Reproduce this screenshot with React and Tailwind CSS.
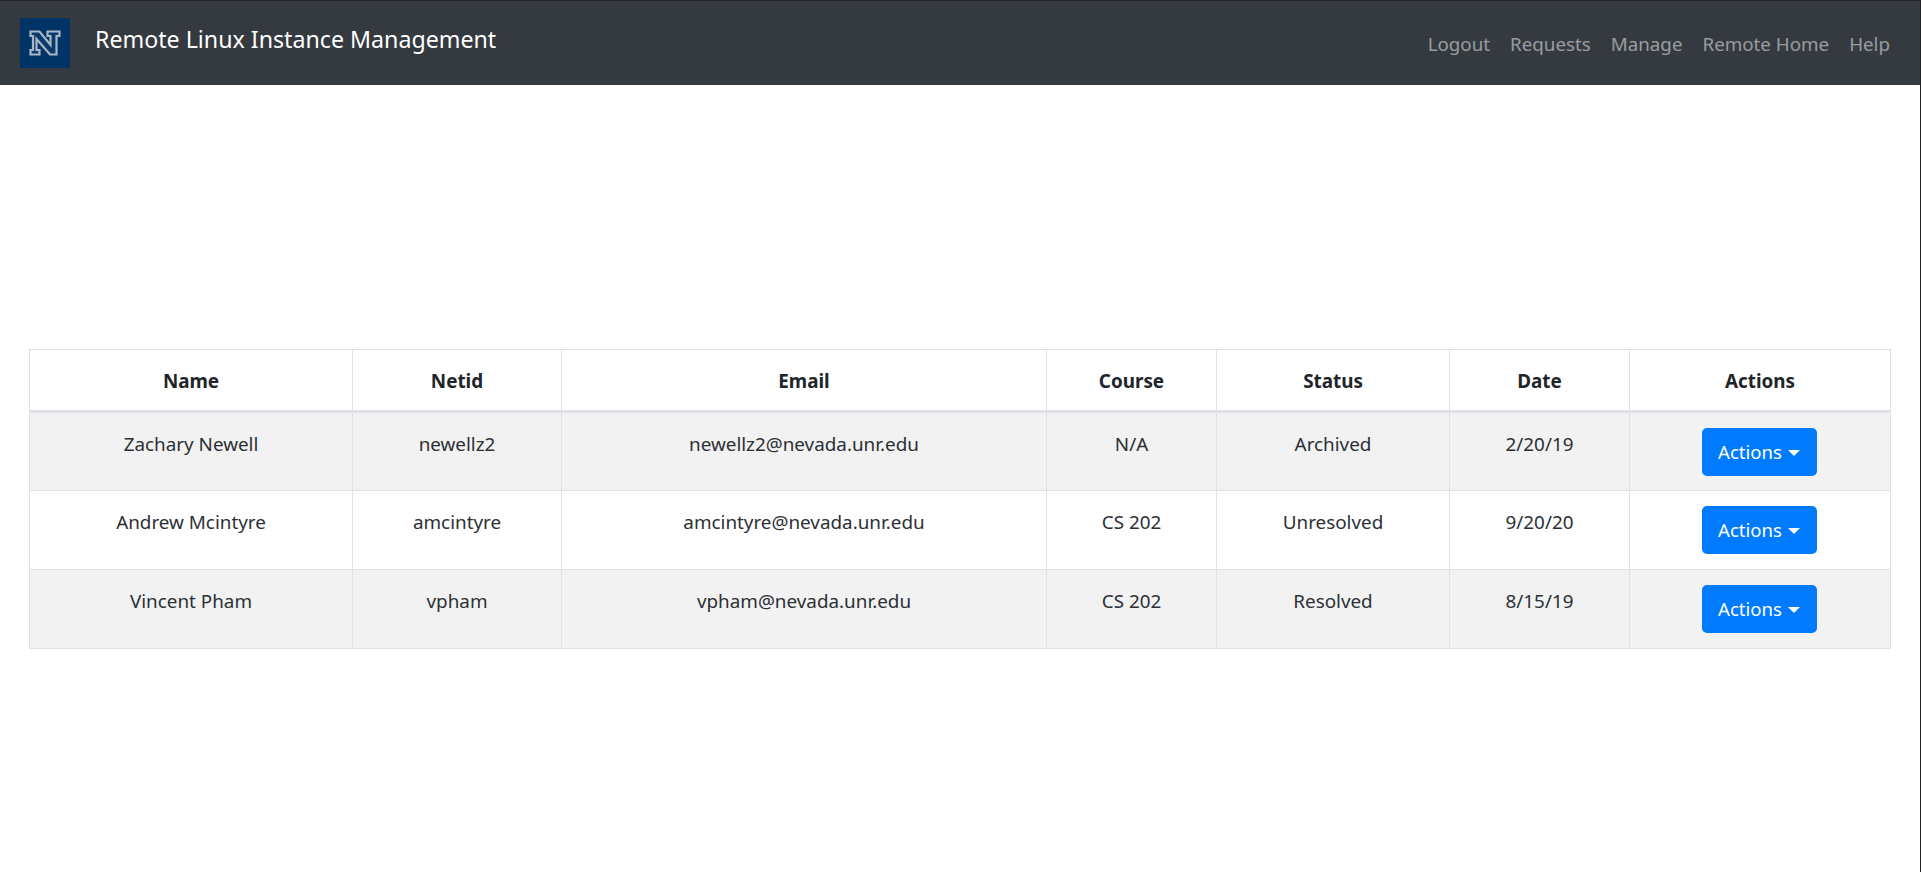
const rows = [
  ["Zachary Newell", "newellz2", "newellz2@nevada.unr.edu", "N/A", "Archived", "2/20/19"],
  ["Andrew Mcintyre", "amcintyre", "amcintyre@nevada.unr.edu", "CS 202", "Unresolved", "9/20/20"],
  ["Vincent Pham", "vpham", "vpham@nevada.unr.edu", "CS 202", "Resolved", "8/15/19"],
];
const headers = ["Name", "Netid", "Email", "Course", "Status", "Date", "Actions"];
const widths = ["w-[323px]", "w-[209px]", "w-[485px]", "w-[170px]", "w-[233px]", "w-[180px]", "w-[261px]"];

function Logo() {
  return (
    <div className="w-[50px] h-[50px] bg-[#003366] flex items-center justify-center shrink-0">
      <svg width="32" height="26" viewBox="0 0 32 26">
        <path d="M1.5 1.5H10.5L21.5 15V6H18.5V1.5H30.5V6H27.5V24.5H21L7.5 9V20H10.5V24.5H1.5V20H4V6H1.5Z" fill="#0b3a6c" stroke="#a9b6c6" strokeWidth="2.2" />
      </svg>
    </div>
  );
}

function Caret() {
  return <span className="inline-block ml-[6px] align-[3px] border-t-[6px] border-x-[6px] border-t-white border-x-transparent" />;
}

export default function App() {
  return (
    <div className="min-h-[872px] bg-white border-r border-r-[#222222] font-['Noto_Sans','Open_Sans',sans-serif] text-[#2b3035] text-[18.85px]">
      <nav className="h-[85px] bg-[#343a40] border-t border-t-[#222222] flex pl-5 pr-[30px]">
        <div className="flex items-start pt-[17px]">
          <Logo />
          <span className="ml-[25px] -mt-[1px] text-[23.2px] leading-[45px] text-white">Remote Linux Instance Management</span>
        </div>
        <div className="ml-auto flex items-start pt-[28px] gap-[20px] text-[18.75px] leading-[30px] text-white/50">
          <a>Logout</a>
          <a>Requests</a>
          <a>Manage</a>
          <a>Remote Home</a>
          <a>Help</a>
        </div>
      </nav>
      <div className="pt-[264px] pl-[29px] pr-[30px]">
        <table className="w-full table-fixed border-collapse text-center">
          <thead>
            <tr className="h-[62px]">
              {headers.map((h, i) => (
                <th key={h} className={`${widths[i]} border border-[#dee2e6] border-b-[3px] font-bold pt-[2px] text-[#212529]`}>{h}</th>
              ))}
            </tr>
          </thead>
          <tbody>
            {rows.map((r, i) => (
              <tr key={r[0]} className={i % 2 === 0 ? "bg-[#f2f2f2]" : "bg-white"}>
                {r.map((c) => (
                  <td key={c} className="h-[79px] border border-[#dee2e6] align-top pt-[16px] leading-[30px]">{c}</td>
                ))}
                <td className="border border-[#dee2e6] align-middle">
                  <button className="h-[48px] w-[115px] mr-[2px] rounded-[5px] bg-[#007bff] text-white leading-[30px] text-[18.6px]">
                    Actions<Caret />
                  </button>
                </td>
              </tr>
            ))}
          </tbody>
        </table>
      </div>
    </div>
  );
}
